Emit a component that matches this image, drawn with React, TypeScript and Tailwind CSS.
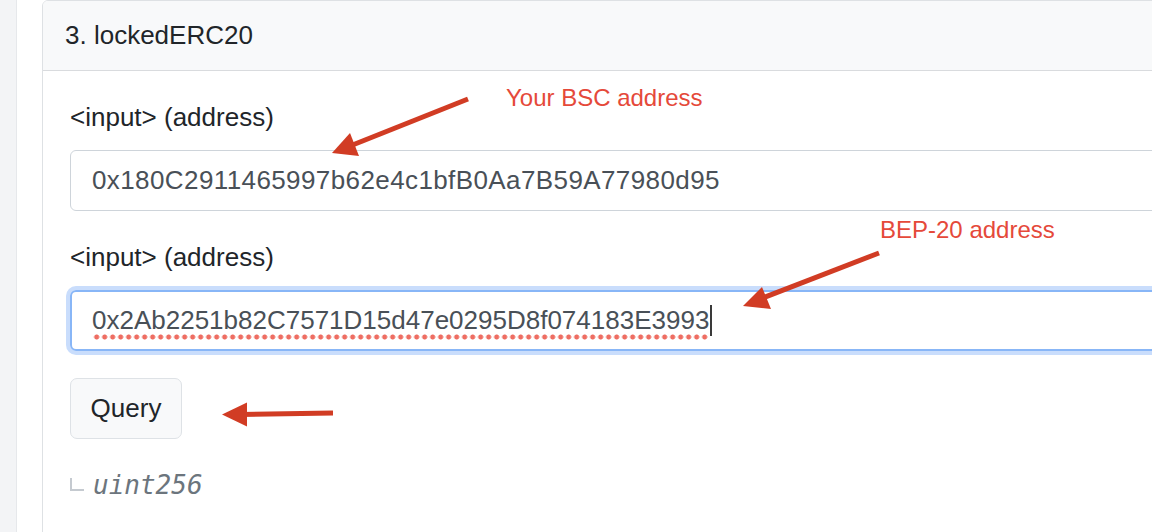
import React from "react";

export default function App() {
  return (
    <div className="relative w-[1152px] h-[532px] overflow-hidden bg-white flex font-['Liberation_Sans',Arial,sans-serif]">
      <div className="w-[17px] shrink-0 bg-[#f3f4f6] border-r border-[#e6e8eb]" />
      <div className="pl-[25px] shrink-0">
        <div className="w-[1200px] h-[600px] border border-[#dee1e4] rounded-tl-[6px] overflow-hidden">
          <div className="h-[70px] bg-[#f8f9fa] border-b border-[#d9dbde] flex items-center pl-[22px] pb-[1px] text-[26px] text-[#212529]">
            3. lockedERC20
          </div>
          <div className="pl-[27px] pt-[31px] flex flex-col items-start">
            <div className="text-[26px] leading-[30px] text-[#212529]">&lt;input&gt; (address)</div>
            <div className="mt-[18px] w-[1150px] h-[61px] border border-[#ced4da] rounded-[6px] pl-[21px] flex items-center text-[26px] tracking-[0.4px] text-[#495057]">
              0x180C2911465997b62e4c1bfB0Aa7B59A77980d95
            </div>
            <div className="mt-[31px] text-[26px] leading-[30px] text-[#212529]">&lt;input&gt; (address)</div>
            <div className="mt-[18px] w-[1150px] h-[61px] border-2 border-[#88b6f7] rounded-[6px] shadow-[0_0_0_4px_#c9ddfc] pl-[20px] flex items-center text-[26px] text-[#495057]">
              <span className="bg-[radial-gradient(circle,#ee6d62_2.2px,transparent_2.9px)] bg-[length:8px_6px] bg-repeat-x bg-bottom">
                0x2Ab2251b82C7571D15d47e0295D8f074183E3993
              </span>
              <span className="inline-block w-[2px] h-[31px] bg-[#3a3a3a] ml-[1px]" />
            </div>
            <button className="mt-[27px] w-[112px] h-[61px] bg-[#f8f9fa] border border-[#dee2e6] rounded-[7px] text-[26px] text-[#212529] flex items-center justify-center">
              Query
            </button>
            <div className="mt-[31px] h-[30px] flex items-center">
              <span className="w-[14px] h-[13px] border-l-2 border-b-2 border-[#c5cad0] -mt-[2px]" />
              <span className="ml-[9px] text-[26px] italic text-[#6c757d] font-['DejaVu_Sans_Mono',monospace]">
                uint256
              </span>
            </div>
          </div>
        </div>
      </div>

      <div className="absolute left-[506px] top-[86px] text-[24px] leading-[24px] text-[#e5493a] whitespace-nowrap">
        Your BSC address
      </div>
      <div className="absolute left-[880px] top-[218px] text-[24px] leading-[24px] text-[#e5493a] whitespace-nowrap">
        BEP-20 address
      </div>

      <svg className="absolute left-0 top-0" width="1152" height="532" viewBox="0 0 1152 532">
        <g fill="#d13c24" stroke="#d13c24" strokeLinecap="butt">
          <line x1="468" y1="99" x2="350" y2="146" strokeWidth="5" />
          <polygon points="332,153 350,133 359,156" stroke="none" />
          <line x1="879" y1="253" x2="760" y2="299" strokeWidth="5" />
          <polygon points="743,306 762,287 771,309" stroke="none" />
          <line x1="333" y1="413" x2="240" y2="414.5" strokeWidth="5" />
          <polygon points="222,414.5 247,402.5 247,426.5" stroke="none" />
        </g>
      </svg>
    </div>
  );
}
